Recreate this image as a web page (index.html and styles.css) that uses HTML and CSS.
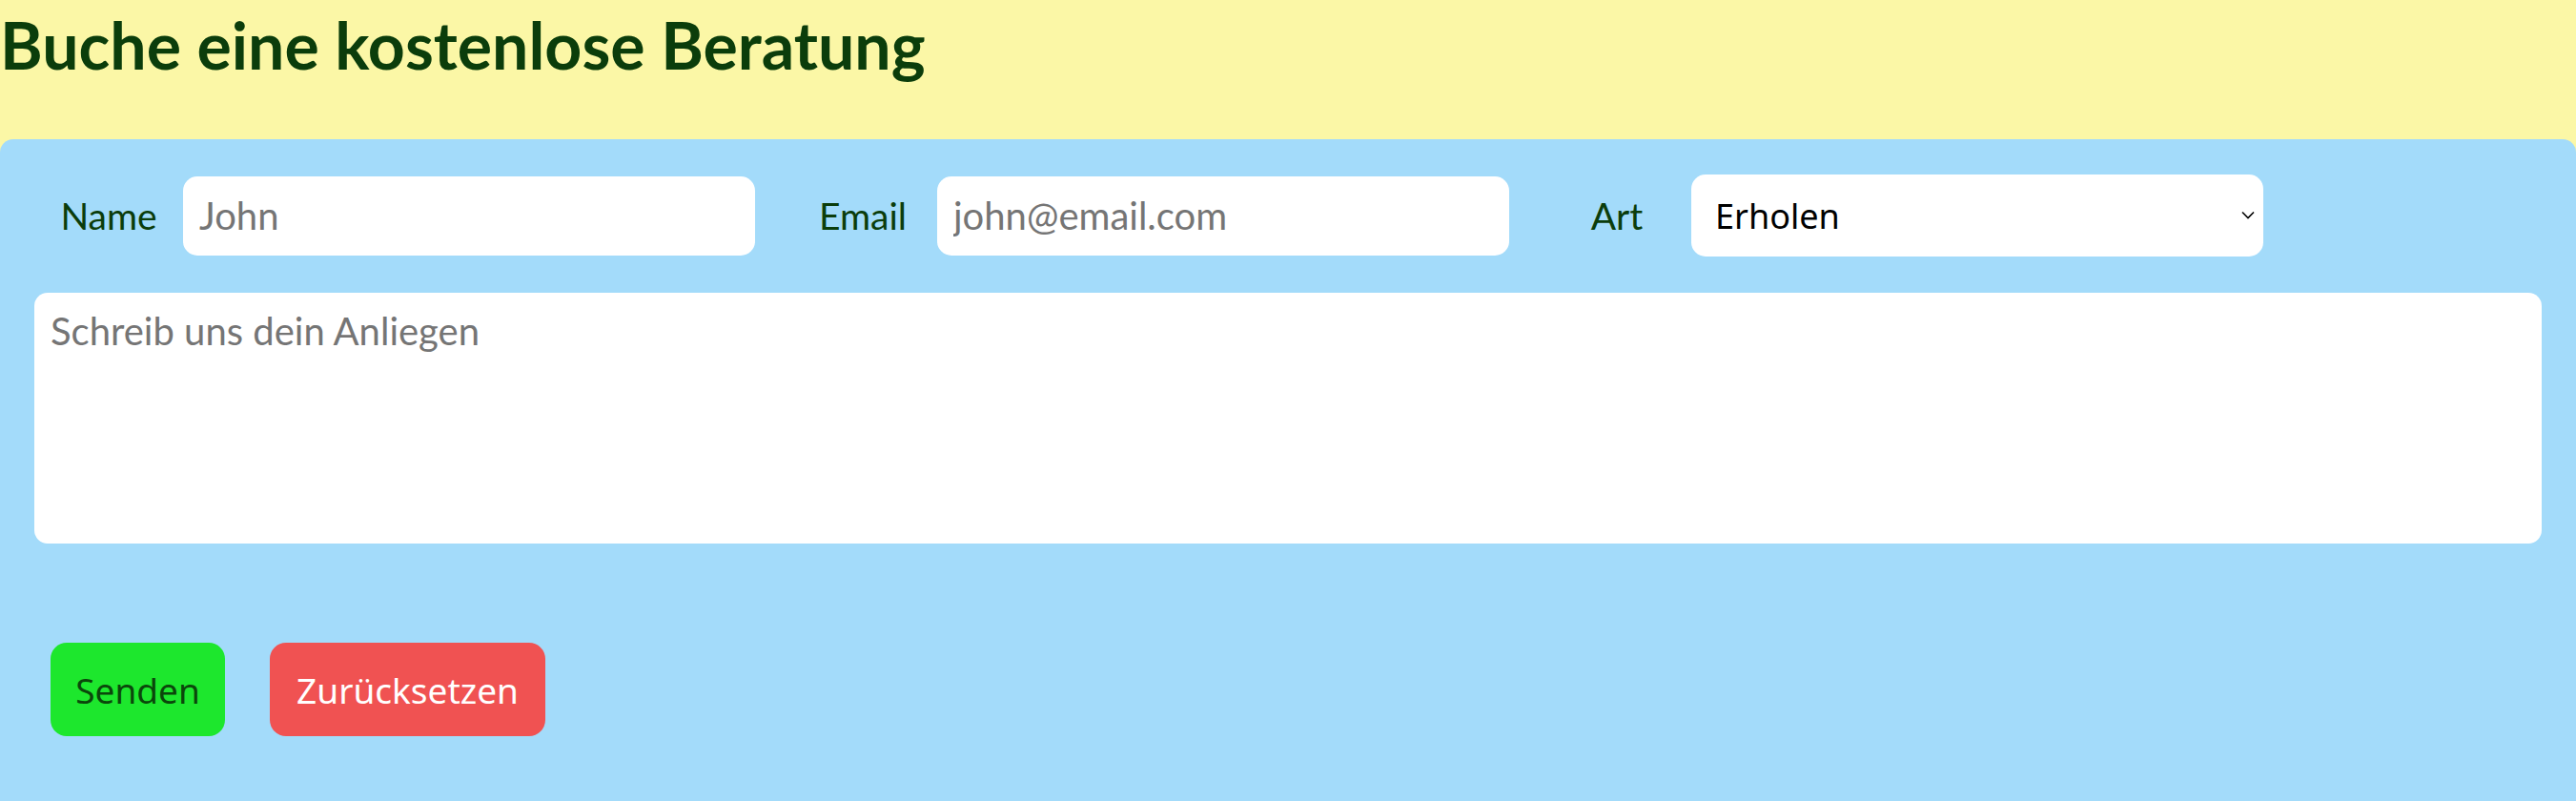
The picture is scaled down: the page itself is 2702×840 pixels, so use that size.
FILE: index.html
```html
<!DOCTYPE html>
<html lang="de">
<head>
<meta charset="utf-8">
<title>Buche eine kostenlose Beratung</title>
<link rel="stylesheet" href="styles.css">
</head>
<body>
  <header class="page-head">
    <h1 class="title">Buche eine kostenlose Beratung</h1>
  </header>
  <form class="panel">
    <div class="fields">
      <label class="field-label" for="name">Name</label>
      <input class="field-input" id="name" type="text" placeholder="John">
      <label class="field-label field-label--spaced" for="email">Email</label>
      <input class="field-input" id="email" type="email" placeholder="john@email.com">
      <label class="field-label field-label--spaced" for="art">Art</label>
      <div class="select-wrap">
        <select class="field-select" id="art">
          <option>Erholen</option>
          <option>Sport</option>
        </select>
        <svg class="select-chevron" width="14" height="9" viewBox="0 0 14 9" aria-hidden="true">
          <path d="M1 1.5 L7 7.5 L13 1.5" fill="none" stroke="#000" stroke-width="1.6"/>
        </svg>
      </div>
    </div>
    <textarea class="message" placeholder="Schreib uns dein Anliegen"></textarea>
    <div class="actions">
      <button class="btn btn--send" type="submit">Senden</button>
      <button class="btn btn--reset" type="reset">Zurücksetzen</button>
    </div>
  </form>
</body>
</html>
```
FILE: styles.css
```css
html, body {
  margin: 0;
  padding: 0;
}

body {
  background: #fbf7a6;
  font-family: "Lato", "Noto Sans", sans-serif;
  color: #0b3d0b;
  min-height: 100vh;
  display: flex;
  flex-direction: column;
  overflow: hidden;
}

.page-head {
  padding: 6px 0 0 0;
  height: 140px;
}

.title {
  margin: 0;
  font-family: "Lato", "Noto Sans", sans-serif;
  font-weight: 700;
  font-size: 68px;
  line-height: 1.2;
  color: #0b3d0b;
  white-space: nowrap;
}

.panel {
  flex: 1;
  background: #a3dbfa;
  border-radius: 14px 14px 0 0;
  padding: 37px 36px 0 36px;
  display: flex;
  flex-direction: column;
}

.fields {
  display: flex;
  align-items: center;
  height: 86px;
}

.field-label {
  width: 156px;
  flex: none;
  text-align: center;
  font-size: 39px;
  color: #0b3d0b;
}

.field-label--spaced {
  margin-left: 35px;
}

.field-input {
  flex: none;
  box-sizing: border-box;
  width: 600px;
  height: 83px;
  border: none;
  border-radius: 15px;
  background: #fff;
  padding: 0 17px;
  font-family: "Lato", "Noto Sans", sans-serif;
  font-size: 40px;
  color: #000;
  outline: none;
}

.field-input::placeholder,
.message::placeholder {
  color: #757575;
}

.select-wrap {
  position: relative;
  flex: none;
  width: 600px;
  height: 86px;
}

.field-select {
  box-sizing: border-box;
  width: 100%;
  height: 100%;
  border: none;
  border-radius: 15px;
  background: #fff;
  padding: 0 25px;
  font-family: "Noto Sans", sans-serif;
  font-size: 36px;
  color: #000;
  appearance: none;
  -webkit-appearance: none;
  outline: none;
}

.select-chevron {
  position: absolute;
  right: 9px;
  top: 38px;
  pointer-events: none;
}

.message {
  box-sizing: border-box;
  display: block;
  width: 100%;
  height: 263px;
  margin-top: 38px;
  border: none;
  border-radius: 14px;
  background: #fff;
  padding: 16px 17px;
  font-family: "Lato", "Noto Sans", sans-serif;
  font-size: 40px;
  resize: none;
  outline: none;
}

.actions {
  display: flex;
  gap: 47px;
  margin-top: 104px;
  padding-left: 17px;
}

.btn {
  box-sizing: border-box;
  height: 98px;
  border: none;
  border-radius: 17px;
  font-family: "Noto Sans", sans-serif;
  font-size: 37px;
  cursor: pointer;
}

.btn--send {
  width: 183px;
  background: #1de72d;
  color: #0b470b;
}

.btn--reset {
  width: 289px;
  background: #f05252;
  color: #fff;
}
```
